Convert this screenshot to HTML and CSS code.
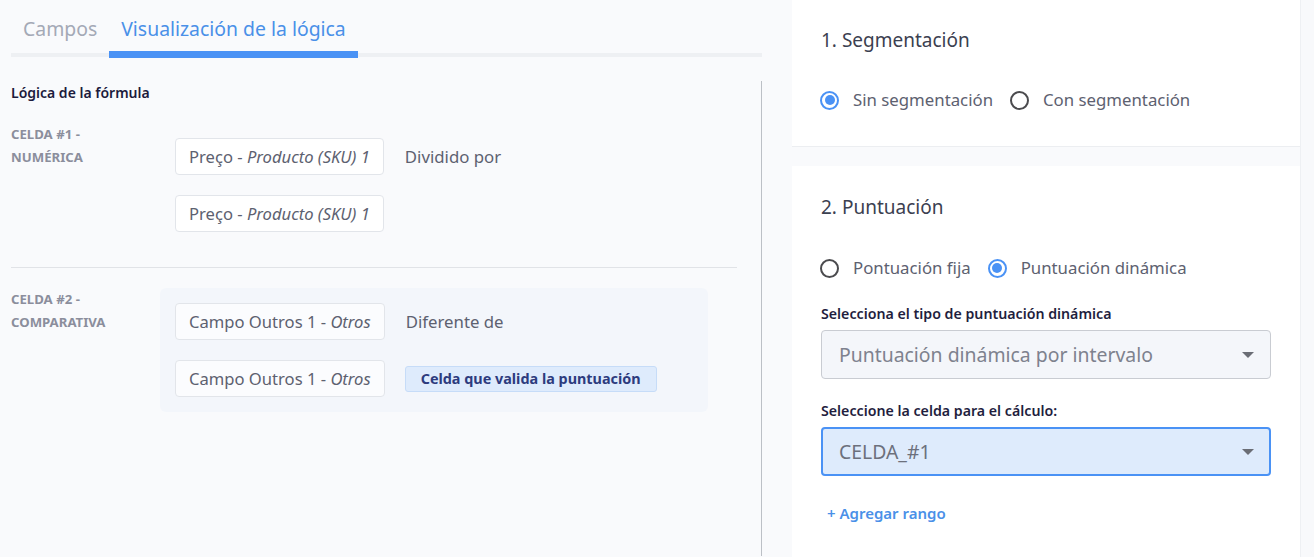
FILE: index.html
```html
<!DOCTYPE html>
<html lang="es">
<head>
<meta charset="utf-8">
<title>Lógica</title>
<link rel="stylesheet" href="styles.css">
</head>
<body>
<div class="page">
  <section class="left">
    <nav class="tabs">
      <div class="tab">Campos</div>
      <div class="tab active">Visualización de la lógica</div>
    </nav>
    <div class="logic">
      <h3 class="logic-title">Lógica de la fórmula</h3>
      <div class="cell-row">
        <div class="cell-label">CELDA #1 -<br>NUMÉRICA</div>
        <div class="cell-body">
          <div class="line">
            <span class="chip">Preço - <em>Producto (SKU) 1</em></span>
            <span class="op">Dividido por</span>
          </div>
          <div class="line">
            <span class="chip">Preço - <em>Producto (SKU) 1</em></span>
          </div>
        </div>
      </div>
      <hr class="row-divider">
      <div class="cell-row">
        <div class="cell-label">CELDA #2 -<br>COMPARATIVA</div>
        <div class="cell-body highlighted">
          <div class="line">
            <span class="chip">Campo Outros 1 - <em>Otros</em></span>
            <span class="op">Diferente de</span>
          </div>
          <div class="line">
            <span class="chip">Campo Outros 1 - <em>Otros</em></span>
            <span class="badge">Celda que valida la puntuación</span>
          </div>
        </div>
      </div>
    </div>
  </section>
  <section class="right">
    <div class="card card-1">
      <h2 class="card-title">1. Segmentación</h2>
      <div class="radios">
        <label class="radio"><span class="dot checked"></span>Sin segmentación</label>
        <label class="radio"><span class="dot"></span>Con segmentación</label>
      </div>
    </div>
    <div class="card card-2">
      <h2 class="card-title">2. Puntuación</h2>
      <div class="radios">
        <label class="radio"><span class="dot"></span>Pontuación fija</label>
        <label class="radio"><span class="dot checked"></span>Puntuación dinámica</label>
      </div>
      <div class="field">
        <div class="field-label">Selecciona el tipo de puntuación dinámica</div>
        <div class="select">Puntuación dinámica por intervalo<span class="caret"></span></div>
      </div>
      <div class="field">
        <div class="field-label">Seleccione la celda para el cálculo:</div>
        <div class="select focused">CELDA_#1<span class="caret"></span></div>
      </div>
      <div class="add-range">+ Agregar rango</div>
    </div>
  </section>
  <div class="edge"></div>
</div>
</body>
</html>
```
FILE: styles.css
```css
* { box-sizing: border-box; }
html, body { margin: 0; padding: 0; }
body {
  font-family: "Noto Sans", "Open Sans", sans-serif;
  background: #f9fafc;
  width: 1314px;
  height: 557px;
  overflow: hidden;
}
.page {
  display: flex;
  height: 557px;
}
.left {
  width: 792px;
  flex: none;
  padding-left: 11px;
  background: #f9fafc;
}
.tabs {
  display: flex;
  width: 751px;
  height: 57px;
  border-bottom: 4px solid #eef0f3;
}
.tab {
  height: 58px;
  margin-bottom: -5px;
  padding: 15px 12px 0;
  font-size: 19.4px;
  line-height: 28px;
  color: #a4a9b6;
  border-bottom: 7px solid transparent;
}
.tab.active {
  color: #4a90e8;
  border-bottom-color: #4a92f5;
}
.logic {
  margin-top: 24px;
  width: 751px;
  height: 475px;
  border-right: 1px solid #bcc0c6;
  padding-top: 3px;
  padding-right: 24px;
}
.logic-title {
  margin: 0 0 21px;
  font-size: 14px;
  line-height: 18px;
  font-weight: 600;
  color: #1c1b3c;
}
.cell-row {
  display: flex;
}
.cell-label {
  width: 149px;
  flex: none;
  font-size: 13.2px;
  line-height: 23px;
  font-weight: 700;
  color: #8b8e9c;
}
.cell-body {
  width: 548px;
  padding: 15px;
  display: flex;
  flex-direction: column;
  gap: 20px;
  border-radius: 6px;
}
.cell-body.highlighted {
  background: #f3f6fb;
}
.line {
  display: flex;
  align-items: center;
  gap: 21px;
}
.chip {
  height: 37px;
  display: inline-flex;
  align-items: center;
  padding: 0 13px;
  background: #ffffff;
  border: 1px solid #e2e5ea;
  border-radius: 4px;
  font-size: 16.6px;
  color: #5d6170;
  white-space: pre;
}
.highlighted .chip { background: #fbfcfe; }
.chip em { font-style: italic; }
.op {
  font-size: 16.8px;
  color: #5d6170;
}
.badge {
  margin-left: -1px;
  height: 26px;
  display: inline-flex;
  align-items: center;
  padding: 0 15px;
  background: #deebfc;
  border: 1px solid #c6dcf8;
  border-radius: 3px;
  font-size: 14.4px;
  font-weight: 700;
  color: #2d3b7e;
}
.row-divider {
  border: 0;
  border-top: 1px solid #e1e3e7;
  margin: 20px 0;
  width: 726px;
}
.right {
  width: 508px;
  flex: none;
  display: flex;
  flex-direction: column;
  gap: 19px;
}
.card {
  background: #ffffff;
  padding: 0 29px;
}
.card-1 {
  padding-top: 27px;
  padding-bottom: 34px;
  border-bottom: 1px solid #eceef1;
}
.card-2 {
  flex: 1;
  padding-top: 28px;
}
.card-title {
  margin: 0;
  font-size: 19px;
  line-height: 26px;
  font-weight: 400;
  color: #3b4050;
}
.radios {
  display: flex;
  gap: 18px;
  margin-top: 35px;
}
.card-2 .radios { margin-top: 36px; }
.radio {
  display: flex;
  align-items: center;
  gap: 14px;
  font-size: 16.8px;
  line-height: 24px;
  color: #5d6170;
}
.dot {
  width: 19px;
  height: 19px;
  border: 2px solid #4b4b4e;
  border-radius: 50%;
  display: inline-flex;
  align-items: center;
  justify-content: center;
  margin-left: -1px;
}
.dot.checked {
  border-color: #4a92f5;
}
.dot.checked::after {
  content: "";
  width: 10px;
  height: 10px;
  border-radius: 50%;
  background: #4a92f5;
}
.field { margin-top: 25px; }
.field + .field { margin-top: 23px; }
.field-label {
  font-size: 14.2px;
  line-height: 18px;
  font-weight: 600;
  color: #1f1e3e;
  margin-bottom: 7px;
}
.select {
  width: 450px;
  height: 49px;
  display: flex;
  align-items: center;
  justify-content: space-between;
  padding: 0 16px 0 17px;
  background: #f4f6fa;
  border: 1px solid #c9ccd2;
  border-radius: 4px;
  font-size: 19.4px;
  color: #7e828e;
}
.select.focused {
  background: #deebfc;
  border: 2px solid #4a92f5;
  padding-left: 16px;
  padding-right: 15px;
  color: #6c707c;
}
.caret {
  width: 0;
  height: 0;
  border-left: 6px solid transparent;
  border-right: 6px solid transparent;
  border-top: 6px solid #6a6d75;
}
.add-range {
  margin-top: 27px;
  margin-left: 6px;
  font-size: 15px;
  line-height: 20px;
  font-weight: 600;
  color: #4a90e8;
}
.edge {
  flex: 1;
  background: #f8f9fb;
  border-left: 1px solid #eef0f3;
}
```
